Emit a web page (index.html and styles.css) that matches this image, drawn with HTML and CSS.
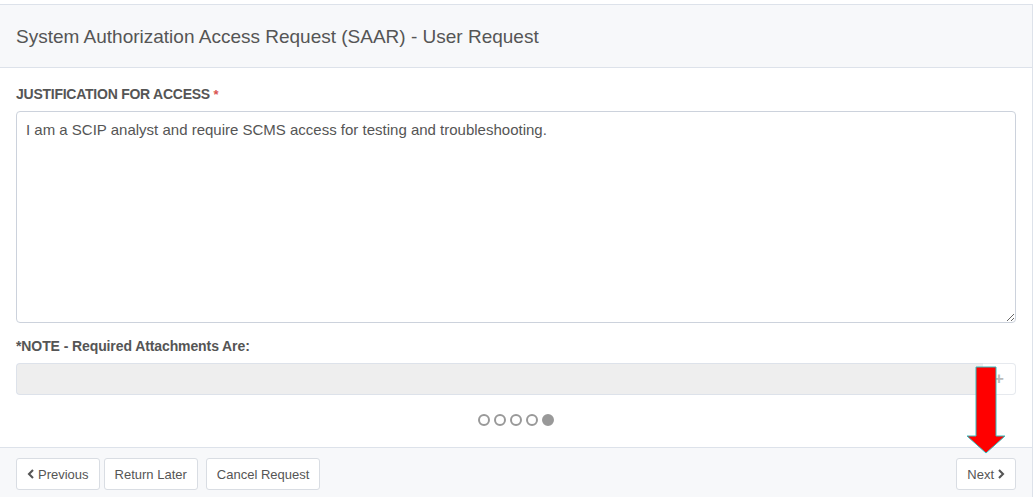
FILE: index.html
```html
<!DOCTYPE html>
<html lang="en">
<head>
<meta charset="utf-8">
<title>SAAR - User Request</title>
<link rel="stylesheet" href="styles.css">
</head>
<body>
<div class="panel">
  <div class="panel-heading">
    <h1 class="panel-title">System Authorization Access Request (SAAR) - User Request</h1>
  </div>
  <div class="panel-body">
    <label class="field-label" for="just">JUSTIFICATION FOR ACCESS <span class="req">*</span></label>
    <textarea id="just" class="textarea">I am a SCIP analyst and require SCMS access for testing and troubleshooting.</textarea>
    <div class="note-label">*NOTE - Required Attachments Are:</div>
    <div class="input-group">
      <div class="input-disabled"></div>
      <span class="addon">+</span>
    </div>
    <div class="dots">
      <span class="dot"></span><span class="dot"></span><span class="dot"></span><span class="dot"></span><span class="dot active"></span>
    </div>
  </div>
  <div class="panel-footer">
    <div class="btn-row">
      <button class="btn"><svg class="chev" viewBox="0 0 10 12" width="8" height="10"><path d="M7.5 1 L2.5 6 L7.5 11" fill="none" stroke="#555" stroke-width="2.6"/></svg> Previous</button>
      <button class="btn">Return Later</button>
      <button class="btn btn-gap">Cancel Request</button>
    </div>
    <button class="btn">Next <svg class="chev" viewBox="0 0 10 12" width="8" height="10"><path d="M2.5 1 L7.5 6 L2.5 11" fill="none" stroke="#555" stroke-width="2.6"/></svg></button>
  </div>
</div>
<svg class="arrow" width="50" height="92" viewBox="0 0 50 92">
  <path d="M11 1 H31 V70 H40 L21 87 L2 70 H11 Z" fill="#ff0000" stroke="#33bbbb" stroke-width="1"/>
</svg>
</body>
</html>
```

FILE: styles.css
```css
* { box-sizing: border-box; }
html, body { margin: 0; padding: 0; }
body {
  font-family: "Liberation Sans", Arial, sans-serif;
  color: #555;
  background: #fff;
  width: 1034px;
  height: 497px;
  overflow: hidden;
  position: relative;
}
.panel {
  margin: 4px 1px 0 -1px;
  border: 1px solid #dde2ea;
  border-bottom: none;
  height: 493px;
  display: flex;
  flex-direction: column;
}
.panel-heading {
  background: #f7f8fa;
  height: 63px;
  border-bottom: 1px solid #dde2ea;
  padding: 0 16px;
  display: flex;
  align-items: center;
}
.panel-title {
  margin: 0;
  font-size: 19px;
  font-weight: normal;
  color: #555;
  padding-top: 2px;
}
.panel-body {
  padding: 18px 16px 0 16px;
  flex: 1;
}
.field-label {
  display: block;
  font-size: 14px;
  font-weight: bold;
  color: #555;
  height: 25px;
  letter-spacing: -0.25px;
}
.req { color: #d9534f; font-size: 13px; }
.textarea {
  display: block;
  width: 1000px;
  height: 212px;
  border: 1px solid #ccd2dc;
  border-radius: 4px;
  padding: 9px 9px;
  font-family: "Liberation Sans", Arial, sans-serif;
  font-size: 15px;
  color: #555;
  resize: vertical;
  margin: 0;
}
.note-label {
  font-size: 14px;
  font-weight: bold;
  letter-spacing: -0.1px;
  color: #555;
  margin-top: 15px;
  height: 25px;
}
.input-group {
  display: flex;
  width: 1000px;
  height: 32px;
}
.input-disabled {
  flex: 1;
  background: #eeeeee;
  border: 1px solid #dde2ea;
  border-right: none;
  border-radius: 4px 0 0 4px;
}
.addon {
  width: 33px;
  border: 1px solid #e6e9ee;
  border-left: none;
  border-radius: 0 4px 4px 0;
  background: #fff;
  color: #bbb;
  font-size: 17px;
  font-weight: bold;
  display: flex;
  align-items: center;
  justify-content: center;
}
.dots {
  display: flex;
  justify-content: center;
  gap: 4px;
  margin-top: 19px;
}
.dot {
  width: 12px;
  height: 12px;
  border-radius: 50%;
  border: 2px solid #999;
  background: #fff;
}
.dot.active { background: #999; }
.panel-footer {
  background: #f7f8fa;
  border-top: 1px solid #dde2ea;
  height: 50px;
  padding: 10px 16px 0 16px;
  display: flex;
  justify-content: space-between;
  align-items: flex-start;
}
.btn-row { display: flex; gap: 4px; }
.btn-gap { margin-left: 4px; }
.btn {
  height: 32px;
  padding: 0 10px;
  background: #fff;
  border: 1px solid #d9dde3;
  border-radius: 3px;
  font-family: "Liberation Sans", Arial, sans-serif;
  font-size: 13px;
  color: #555;
  display: inline-flex;
  align-items: center;
  gap: 3px;
}
.chev { display: block; }
.arrow {
  position: absolute;
  left: 965px;
  top: 366px;
}
```
